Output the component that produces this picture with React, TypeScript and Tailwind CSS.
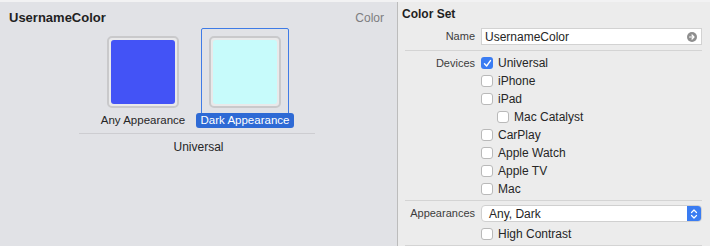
import React from 'react';

const font = { fontFamily: '"Liberation Sans", Arial, sans-serif' };

const devices: { label: string; checked?: boolean; indent?: boolean }[] = [
  { label: 'Universal', checked: true },
  { label: 'iPhone' },
  { label: 'iPad' },
  { label: 'Mac Catalyst', indent: true },
  { label: 'CarPlay' },
  { label: 'Apple Watch' },
  { label: 'Apple TV' },
  { label: 'Mac' },
];

const Checkbox: React.FC<{ checked?: boolean }> = ({ checked }) =>
  checked ? (
    <span className="flex h-[12px] w-[12px] shrink-0 items-center justify-center rounded-[3px] bg-[#3a7cf2]">
      <svg width="9" height="9" viewBox="0 0 9 9">
        <path d="M1.5 4.8 L3.6 7 L7.5 1.6" fill="none" stroke="white" strokeWidth="1.4" strokeLinecap="round" strokeLinejoin="round" />
      </svg>
    </span>
  ) : (
    <span className="h-[12px] w-[12px] shrink-0 rounded-[3px] border border-[#b9b9b9] bg-white" />
  );

const Swatch: React.FC<{ color: string }> = ({ color }) => (
  <div className="h-[72px] w-[72px] rounded-[5px] border-2 border-[#c9c9cb] bg-[#e9e9ea] p-[2px]">
    <div className="h-full w-full rounded-[3px]" style={{ background: color }} />
  </div>
);

const AppearanceItem: React.FC<{ label: string; color: string; selected?: boolean }> = ({ label, color, selected }) => (
  <div className="flex w-[102px] flex-col items-center">
    <div
      className={
        'flex h-[92px] w-[88px] justify-center rounded-t-[2px] border pt-[7px] ' +
        (selected ? 'border-[#3f7be6]' : 'border-transparent')
      }
    >
      <Swatch color={color} />
    </div>
    <div
      className={
        '-mt-[7px] flex h-[15px] items-center whitespace-nowrap rounded-[3px] px-[5px] text-[11.5px] leading-none ' +
        (selected ? 'bg-[#2e6ad5] text-white' : 'text-[#262626]')
      }
    >
      {label}
    </div>
  </div>
);

export default function App() {
  return (
    <div className="flex h-[246px] w-[710px] overflow-hidden border-t-2 border-[#f2f2f3]" style={font}>
      {/* Left: color set preview */}
      <div className="flex w-[397px] shrink-0 flex-col bg-[#e1e2e6]">
        <div className="flex items-center justify-between pl-[9px] pr-[13px] pt-[7px]">
          <span className="text-[13px] font-bold leading-[18px] text-[#1f1f1f]">UsernameColor</span>
          <span className="text-[12px] leading-[18px] text-[#7d7d80]">Color</span>
        </div>
        <div className="mt-[1px] flex pl-[92px]">
          <AppearanceItem label="Any Appearance" color="#4353f6" />
          <AppearanceItem label="Dark Appearance" color="#c7fbfb" selected />
        </div>
        <div className="ml-[79px] mt-[5px] h-px w-[236px] bg-[#cdcdd1]" />
        <div className="mt-[6px] text-center text-[12px] leading-[14px] text-[#262626]">Universal</div>
      </div>

      <div className="w-px shrink-0 bg-[#bcbcbc]" />

      {/* Right: attributes inspector */}
      <div className="flex flex-1 flex-col bg-[#ececec] pr-[8px] text-[12px] text-[#262626]">
        <div className="pl-[4px] pt-[5px] text-[12px] font-bold leading-[14px] text-[#1f1f1f]">Color Set</div>

        <div className="mt-[7px] flex items-center">
          <span className="w-[78px] shrink-0 pr-[1px] text-right text-[11px] text-[#3c3c3c]">Name</span>
          <div className="ml-[5px] flex h-[17px] flex-1 items-center justify-between border border-[#d2d2d2] bg-white pl-[3px] pr-[4px]">
            <span>UsernameColor</span>
            <span className="flex h-[10px] w-[10px] items-center justify-center rounded-full bg-[#8e8e8e]">
              <svg width="8" height="8" viewBox="0 0 8 8">
                <path d="M1.5 4 H6 M4 2 L6 4 L4 6" fill="none" stroke="white" strokeWidth="1.2" strokeLinecap="round" strokeLinejoin="round" />
              </svg>
            </span>
          </div>
        </div>

        <div className="ml-[7px] mt-[5px] h-px bg-[#d4d4d4]" />

        <div className="mt-[3px] flex">
          <span className="w-[78px] shrink-0 pr-[1px] text-right text-[11px] leading-[18px] text-[#3c3c3c]">Devices</span>
          <div className="ml-[5px] flex flex-col">
            {devices.map((d) => (
              <div key={d.label} className={'flex h-[18px] items-center gap-[5px] ' + (d.indent ? 'pl-[16px]' : '')}>
                <Checkbox checked={d.checked} />
                <span>{d.label}</span>
              </div>
            ))}
          </div>
        </div>

        <div className="ml-[7px] mt-[2px] h-px bg-[#d4d4d4]" />

        <div className="mt-[4px] flex items-center">
          <span className="w-[78px] shrink-0 pr-[1px] text-right text-[11px] text-[#3c3c3c]">Appearances</span>
          <div className="ml-[5px] flex h-[17px] flex-1 items-center justify-between overflow-hidden rounded-[4px] border border-[#d0d0d0] bg-white">
            <span className="pl-[7px]">Any, Dark</span>
            <span className="flex h-full w-[14px] items-center justify-center bg-[#3a7cf2]">
              <svg width="8" height="12" viewBox="0 0 8 12">
                <path d="M1.5 4.5 L4 2 L6.5 4.5 M1.5 7.5 L4 10 L6.5 7.5" fill="none" stroke="white" strokeWidth="1.2" strokeLinecap="round" strokeLinejoin="round" />
              </svg>
            </span>
          </div>
        </div>

        <div className="ml-[83px] mt-[3px] flex h-[18px] items-center gap-[5px]">
          <Checkbox />
          <span>High Contrast</span>
        </div>

        <div className="ml-[7px] mt-[2px] h-px bg-[#d4d4d4]" />
      </div>
    </div>
  );
}
